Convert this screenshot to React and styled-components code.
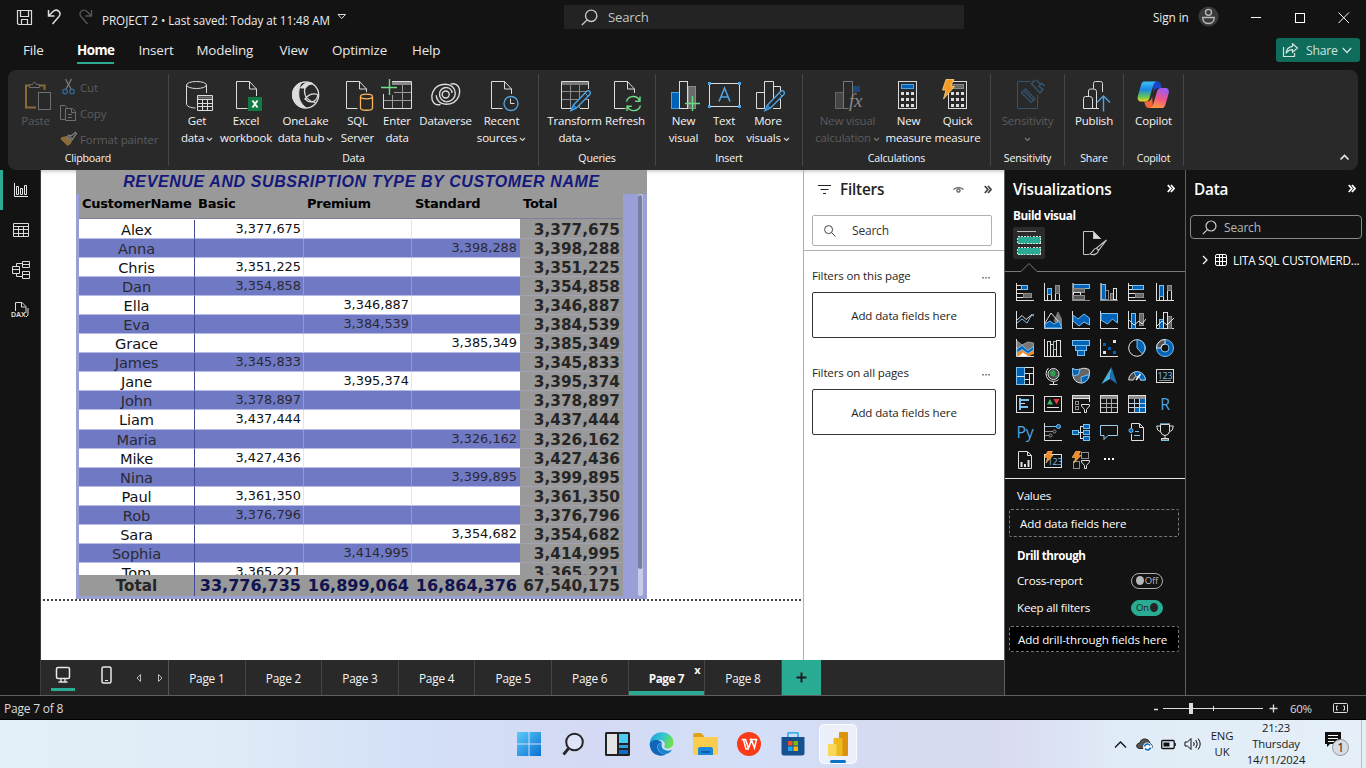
import React from "react";
import styled, { createGlobalStyle, css } from "styled-components";

const ui = `"Open Sans", "Noto Sans", sans-serif`;
const C = { teal: "#2aac94", blue: "#0063b8", sky: "#4fa3e0", ink: "#dcdcdc", ribbon: "#292929", dark: "#131313", grey: "#8a8a8a" };

const Global = createGlobalStyle`
  * { box-sizing: border-box; }
  html, body { margin: 0; padding: 0; overflow: hidden; }
  body { font-family: ${ui}; font-size: 11.5px; letter-spacing: -0.2px; background: ${C.dark}; color: #fff; }
  svg { display: block; flex: none; }
`;

const Window = styled.div`
  width: 1366px; height: 768px; display: flex; flex-direction: column; background: ${C.dark}; white-space: nowrap; overflow: hidden;
`;

/* ---------- Title bar ---------- */
const TitleBar = styled.header`height: 34px; display: flex; align-items: flex-start; flex: none; padding-left: 16px;`;
const QuickAccess = styled.div`display: flex; width: 86px; padding-top: 8px; gap: 13px;`;
const DocName = styled.div`
  width: 462px; display: flex; gap: 7px; padding-top: 12px; line-height: 17px; color: #ececec; font-size: 11.7px; letter-spacing: -0.06px;
  svg { margin-top: 1px; }
`;
const TopSearch = styled.div`
  width: 400px; height: 24px; margin-top: 5px; background: #232323; display: flex; align-items: center; gap: 10px; padding-left: 17px;
  color: #c4c4c4; font-size: 13.2px;
`;
const Account = styled.div`margin-left: 189px; display: flex; padding-top: 6px; gap: 9px; line-height: 23px; color: #ececec; font-size: 11.8px; letter-spacing: -0.1px;`;
const WinButtons = styled.div`display: flex; gap: 31px; margin-left: 30px; padding-top: 11px;`;

/* ---------- Menu ---------- */
const MenuBar = styled.nav`height: 36px; display: flex; flex: none; padding-left: 23px;`;
const MenuItem = styled.div`
  width: ${p => p.$w}px; font-size: 13.4px; line-height: 32px; color: #e8e8e8; letter-spacing: -0.17px;
  span { display: inline-block; height: 30px; ${p => p.$on && css`font-weight: 700; color: #fff; letter-spacing: -0.55px; border-bottom: 2px solid ${C.teal};`} }
`;
const ShareButton = styled.button`
  margin: 4px 6px 0 auto; width: 84px; height: 24px; border: 0; border-radius: 3px; background: #0f6b5a; color: #cfe4de;
  font: 12.2px ${ui}; letter-spacing: -0.2px; display: flex; align-items: center; padding: 0 8px 0 6px; gap: 7px;
  svg:last-child { margin-left: -3px; }
`;

/* ---------- Ribbon ---------- */
const Ribbon = styled.section`
  height: 100px; margin: 0 8px; background: ${C.ribbon}; border-radius: 8px; display: flex; flex: none; padding: 4px 0;
`;
const Group = styled.div`
  width: ${p => p.$w}px; border-right: 1px solid #454545; display: flex; flex-direction: column; height: 92px;
`;
const Items = styled.div`height: 75px; display: flex; padding-left: ${p => p.$pl || 0}px;`;
const GroupName = styled.div`
  height: 17px; line-height: 18px; text-align: center; font-size: 10.6px; font-weight: 500; color: #f6f6f6; letter-spacing: -0.2px;
`;
const RibbonItem = styled.div`
  width: ${p => p.$w}px; display: flex; flex-direction: column; align-items: center; padding-top: 5px;
  color: ${p => (p.$dim ? "#5c5c5c" : "#f4f4f4")}; letter-spacing: -0.18px;
`;
const Label = styled.div`
  height: 16.5px; line-height: 16px; display: flex; align-items: center; gap: 2px; justify-content: center;
  svg { margin-top: 4px; }
`;
const ClipList = styled.div`display: flex; flex-direction: column; margin-left: 8px; `;
const ClipRow = styled.div`height: 26px; flex: none; display: flex; align-items: center; color: #5c5c5c; letter-spacing: -0.15px;`;
const Collapse = styled.div`margin-left: auto; align-self: flex-end; padding: 0 8px 5px 0;`;

/* ---------- Body ---------- */
const Body = styled.main`height: 525px; display: flex; flex: none;`;
const Rail = styled.aside`width: 41px; display: flex; flex-direction: column; border-right: 1px solid #3c3c3c;`;
const RailItem = styled.div`
  height: 40px; display: flex; align-items: center; justify-content: center; border-left: 3px solid ${p => (p.$on ? C.teal : "transparent")}; padding-right: 2px;
`;
const Work = styled.div`width: 963px; display: flex; flex-direction: column;`;
const WorkTop = styled.div`height: 490px; display: flex;`;
const Canvas = styled.div`
  width: 762px; background: #fff; padding-left: 35px; overflow: hidden; box-shadow: inset 0 5px 4px -4px #bbb;
`;
const PageEdge = styled.div`
  height: 2px; margin-left: -35px; width: 761px; background: repeating-linear-gradient(90deg, #fff 0 2px, #444 2px 4px);
`;

/* ---------- Matrix visual ---------- */
const Matrix = styled.div`width: 571px; height: 429px; background: #9a9fd8; color: #111; font-family: "DejaVu Sans", sans-serif; letter-spacing: 0;`;
const MatrixTitle = styled.h1`
  margin: 0; height: 24px; background: #999; text-align: center; font: italic 700 16px/23px "Liberation Sans", sans-serif; color: #14187c; letter-spacing: 0.6px;
`;
const MatrixBody = styled.div`display: flex; padding-left: 3px; height: 405px;`;
const Grid = styled.div`width: 544px; display: flex; flex-direction: column;`;
const HeadRow = styled.div`
  height: 25px; background: #999; border-bottom: 1px solid #7c809c; display: flex; font-weight: 700; font-size: 13px; line-height: 19px; letter-spacing: -0.25px; color: #000; flex: none;
`;
const HeadCell = styled.div`width: ${p => p.$w}px; padding-left: 3px;`;
const Rows = styled.div`height: 356px; overflow: hidden; background: #fff;`;
const RowsInner = styled.div`padding-top: 1px; background: linear-gradient(90deg, transparent 441px, #999 441px);`;
const Row = styled.div`
  height: 19.06px; display: flex; background: ${p => (p.$alt ? "#7079c4" : "#fff")}; color: ${p => (p.$alt ? "#2a2a33" : "#111")};
`;
const NameCell = styled.div`
  width: 116px; border-right: 1px solid #454a94; border-bottom: 1px solid #b9bde6; text-align: center; font-size: 14.6px; line-height: 19.5px; letter-spacing: -0.1px;
`;
const ValueCell = styled.div`
  width: ${p => p.$w}px; border-right: ${p => (p.$last ? "0" : "1px solid rgba(190,194,230,.45)")}; border-bottom: 1px solid #b9bde6;
  padding-right: ${p => (p.$last ? 3 : 2)}px; text-align: right; font-size: 12.9px; line-height: 17.5px;
`;
const TotalCell = styled.div`
  width: 103px; background: #999; border-bottom: 1px solid #a2a2b2; color: #262626; font-weight: 700; font-size: 15.3px; line-height: 20px; text-align: right; padding-right: 3px;
`;
const TotalRow = styled.div`height: 21px; background: #999; display: flex; font-weight: 700; font-size: 16px; line-height: 22px; color: #10134f; flex: none;`;
const TotalName = styled.div`width: 116px; border-right: 1px solid #454a94; text-align: center; font-size: 15.2px; color: #262626;`;
const TotalValue = styled.div`width: ${p => p.$w}px; text-align: right; padding-right: 3px; ${p => p.$grand && css`font-size: 15.3px; color: #262626;`}`;
const Scroll = styled.div`width: 5px; height: 402px; margin-left: 15px; background: #c9cbea; border-radius: 3px;`;
const Thumb = styled.div`height: 374px; background: #7b7f9f; border-radius: 3px; margin-top: 1px; border-right: 1px solid #b9bbd6;`;

/* ---------- Filters ---------- */
const Filters = styled.aside`width: 201px; background: #fff; border-left: 1px solid #b3b0ad; color: #252423; box-shadow: inset 0 5px 4px -4px #bbb;`;
const PaneHead = styled.div`height: 38px; display: flex; align-items: center; padding: 0 12px 0 14px; gap: 9px;`;
const PaneTitle = styled.h2`margin: 0; font-size: 15.3px; font-weight: 600; letter-spacing: -0.2px; line-height: 20px; flex: 1;`;
const PaneTools = styled.div`display: flex; align-items: center; gap: 20px; margin-top: 1px;`;
const SearchBox = styled.div`
  height: ${p => p.$h}px; border: 1px solid ${p => p.$b}; border-radius: 2px; display: flex; align-items: center; gap: ${p => p.$gap}px; padding-left: 11px; font-size: 12px;
  color: ${p => p.$c};
`;
const FilterTop = styled.div`height: 81px; border-bottom: 1px solid #b3b0ad; ${SearchBox} { margin: 7px 12px 0 8px; }`;
const FilterBlock = styled.div`height: 97px; padding: 16px 8px 0;`;
const FilterLabel = styled.div`height: 25px; line-height: 18px; display: flex; justify-content: space-between; padding-right: 5px; letter-spacing: -0.12px;`;
const DropBox = styled.div`
  height: 46px; border: 1px solid #333; border-radius: 2px; display: flex; align-items: center; justify-content: center; font-size: 11.5px; letter-spacing: -0.1px;
`;

/* ---------- Page tabs ---------- */
const TabBar = styled.div`height: 35px; background: ${C.ribbon}; display: flex; `;
const ViewSwitch = styled.div`width: 128px; border-right: 1px solid #555; display: flex; padding: 6px 3px 0 10px;`;
const DeviceButton = styled.div`
  width: 24px; height: 25px; display: flex; justify-content: center; border-bottom: 3px solid ${p => (p.$on ? C.teal : "transparent")}; margin-right: ${p => p.$mr}px;
`;
const Tab = styled.div`
  width: 76.6px; position: relative; text-align: center; line-height: 37px; font-size: 11.8px; letter-spacing: -0.2px; color: #f6f6f6; border-right: 1px solid #454545;
  ${p => p.$on && css`font-weight: 700; letter-spacing: -0.45px; box-shadow: inset 0 -4px 0 ${C.teal};`}
`;
const TabClose = styled.span`position: absolute; right: 4px; top: 1px; font-size: 11px; line-height: 18px; font-weight: 700;`;
const AddTab = styled.div`width: 39px; background: ${C.teal}; display: flex; align-items: center; justify-content: center; padding-bottom: 1px;`;

/* ---------- Visualizations ---------- */
const Viz = styled.aside`width: 182px; border: 0 solid #5f5f5f; border-left-width: 1px; border-right-width: 1px;`;
const VizHead = styled.div`height: 38px; display: flex; align-items: center; padding: 0 10px 0 8px; svg { margin-top: -1px; }`;
const VizSub = styled.div`height: 19px; line-height: 15px; padding-left: 8px; font-weight: 700; letter-spacing: -0.45px; font-size: 11.8px;`;
const VizModes = styled.div`display: flex; height: 32px; padding-left: 8px; gap: 34px;`;
const Mode = styled.div`width: 32px; height: 32px; border-radius: 2px; background: ${p => (p.$on ? "#2b2b2b" : "none")}; display: flex; align-items: center; justify-content: center;`;
const VizGrid = styled.div`display: grid; grid-template-columns: repeat(6, 18px); grid-auto-rows: 18px; gap: 10px; padding: 11px 0 0 11px; height: 207px; border-bottom: 1px solid #e8e8e8;`;
const GlyphCell = styled.div`
  font-size: 16px; line-height: 18px; color: ${C.sky}; display: flex; align-items: center; justify-content: center; letter-spacing: -0.2px;
`;
const Wells = styled.div`padding: 7px 6px 0 4px; font-size: 11.6px;`;
const WellLabel = styled.div`height: ${p => (p.$b ? 21 : 23)}px; line-height: 20px; padding-left: 8px; font-weight: ${p => (p.$b ? 700 : 500)}; letter-spacing: ${p => (p.$b ? -0.45 : -0.25)}px;`;
const Well = styled.div`
  height: ${p => p.$h}px; border: 1px dashed #777; border-radius: 2px; background: ${p => (p.$black ? "#000" : "none")}; padding-left: ${p => (p.$black ? 8 : 10)}px;
  display: flex; align-items: center; margin: ${p => (p.$black ? 5 : 0)}px 0 9px; font-weight: 500; letter-spacing: -0.1px;
`;
const ToggleRow = styled.div`height: 27px; display: flex; align-items: center; justify-content: space-between; padding: 0 16px 0 8px; font-weight: 500;`;
const Toggle = styled.div`
  width: 32px; height: 16px; border-radius: 8px; border: 1px solid ${p => (p.$on ? C.teal : "#b0b0b0")}; background: ${p => (p.$on ? C.teal : "none")};
  display: flex; flex-direction: ${p => (p.$on ? "row-reverse" : "row")}; align-items: center; gap: 1px; padding: 0 4px; font-size: 9.5px; font-weight: 400; color: ${p => (p.$on ? "#222" : "#b8b8b8")};
  i { width: 9px; height: 9px; border-radius: 50%; background: ${p => (p.$on ? "#252525" : "#b8b8b8")}; }
`;

/* ---------- Data ---------- */
const DataPane = styled.aside`flex: 1;`;
const DataSearch = styled.div`padding: 7px 4px 0 4px; ${SearchBox} { border-radius: 4px; }`;
const TableNode = styled.div`height: 24px; margin-top: 9px; padding-left: 15px; display: flex; align-items: center; gap: 5px; font-size: 11.7px; font-weight: 500; letter-spacing: -0.2px;`;

/* ---------- Status + taskbar ---------- */
const StatusBar = styled.footer`height: 25px; flex: none; border-top: 1px solid #5f5f5f; border-bottom: 1px solid #000; display: flex; align-items: center; padding: 2px 18px 0 4px; color: #dcdcdc; font-size: 12px;`;
const Zoom = styled.div`margin-left: auto; display: flex; align-items: center;`;
const Percent = styled.span`margin: 0 19px 0 12px; width: 24px; font-size: 11.5px; letter-spacing: -0.35px;`;
const Taskbar = styled.div`
  height: 48px; flex: none; display: flex; align-items: center; color: #1a1a1a;
  background: linear-gradient(90deg, #e3f0f8 0, #dfebf7 17%, #d3e0f7 30%, #d4daf4 43%, #d3dff8 55%, #d6dbf0 66%, #d9dcf1 74%, #e0ecf7 82%, #e4eff8 100%);
`;
const Apps = styled.div`margin-left: 507px; display: flex;`;
const AppSlot = styled.div`
  width: 44px; height: 40px; display: flex; align-items: center; justify-content: center; position: relative;
  ${p => p.$on && css`width: 38px; margin-left: 4px; background: rgba(255,255,255,.55); border-radius: 5px; border: 1px solid rgba(255,255,255,.7); &::after { content: ""; position: absolute; bottom: 0; width: 16px; height: 3px; border-radius: 2px; background: #0a73c8; }`}
`;
const Tray = styled.div`margin-left: auto; display: flex; align-items: center; gap: 8px;`;
const TrayText = styled.div`width: ${p => p.$w}px; text-align: center; font-size: 11.3px; line-height: ${p => p.$lh}px; letter-spacing: ${p => p.$ls}px;`;
const Edge = styled.div`width: 5px; height: 48px; border-left: 1px solid #b9c0cc; margin-left: 3px;`;

/* ---------- Icons ---------- */
const Svg = ({ w = 18, h = 18, s = C.ink, children, crisp }) => (
  <svg width={w} height={h} viewBox={`0 0 ${w} ${h}`} fill="none" stroke={s} strokeWidth="1" shapeRendering={crisp ? "crispEdges" : undefined}>{children}</svg>
);
const Chev = ({ c = "#d0d0d0" }) => <Svg w={7} h={5} s={c}><path d="M1 1l2.5 2.5L6 1" strokeWidth="1.2" /></Svg>;
const Lens = ({ c, n = 15, w = 1.2 }) => (
  <svg width={n} height={n} viewBox="0 0 15 15" fill="none" stroke={c} strokeWidth={w}><circle cx="9" cy="6" r="5" /><path d="M5.4 9.6L.8 14.2" /></svg>
);
const LensR = ({ c }) => (
  <svg width="12" height="12" viewBox="0 0 12 12" fill="none" stroke={c}><circle cx="4.6" cy="4.6" r="4" /><path d="M7.5 7.5l4 4" /></svg>
);
const Doc = ({ x, cut }) => (
  <path d={`M${x + 20.5} ${cut || 18}V10l-7-7.5H${x + .5}v27h${cut ? 11 : 11.5}M${x + 13.5} 2.5V10h7`} />
);
const Pencil = () => (
  <g stroke={C.sky}><path d="M19.5 26L32.5 12.5a2.2 2.2 0 013.3 3L22.5 29l-5.5 2.5z" fill="#292929" strokeWidth="1.4" /><path d="M19.5 26l3 3-5.5 2.5z" fill="#0a78d4" /><path d="M31 14l3 3" /></g>
);
const Calc = ({ x, d }) => (
  <g><rect x={x + .5} y="2.5" width="18" height="27" fill="#292929" /><rect x={x + 3.5} y="5.5" width="12" height="4" fill={d} stroke={d === C.blue ? C.sky : C.grey} />
    {[13, 19, 25].map(y => [3, 8, 13].map(k => <rect key={y + "-" + k} x={x + k} y={y} width="3" height="3" fill={C.ink} stroke="none" />))}</g>
);

const icons = {
  get: <><path d="M9.5 6v19c0 2 4 4 9 4M29.5 6v8" /><ellipse cx="19.5" cy="6" rx="10" ry="3.5" /><path d="M20.5 16.500h15v15h-15zM20.500 20.500h15M20.500 24.500h15M20.500 27.500h15M25.500 20v11M30.500 20v11" /><path d="M21 18.500h14" stroke="#777" strokeWidth="2" /></>,
  excel: <><Doc x={10} cut={17} /><rect x="22" y="18" width="14" height="14" fill="#107c41" stroke="none" /><path d="M26.500 21.500l5 7M31.500 21.500l-5 7" stroke="#fff" strokeWidth="1.8" /></>,
  lake: <><circle cx="20.7" cy="16" r="13" strokeWidth="1.3" /><path d="M16.500 3.500C11 5 7 10 7.500 17c.6 6 6 11.500 13.500 11.700-5-4-7-8-7.200-12.700C13.600 11 14.500 7 16.500 3.500z" fill={C.ink} /><path d="M17 8c4-4 8-4.500 10.500-3.300C22 5 19.500 8 19.500 12c0 6 4 10.500 11 11.500M33 15.500c-5-1.500-10 .5-13 4.500 5 5 11.500 3.500 13-4.500z" strokeWidth="1.3" /><path d="M15.500 9c3-5 8-6.500 12.500-4.300-3.500.3-5.500 1.500-7.500 4.300z" fill={C.ink} /></>,
  sql: <><Doc x={9} cut={13} /><path d="M23.500 18v11c0 3 12 3 12 0V18" stroke="#f7b45a" fill="#292929" strokeWidth="1.3" /><ellipse cx="29.500" cy="17.500" rx="6" ry="2.300" stroke="#f7b45a" strokeWidth="1.300" /></>,
  enter: <><path d="M15 4.500h19" stroke="#8a8a8a" strokeWidth="3" /><path d="M7 21.500h27M17 13.500h17M15.500 16v13M25.500 6v23" stroke="#9a9a9a" /><path d="M15 2.500h19.500v27H6.500V15" /><path d="M4 8.500h16M12.500 0v16" stroke="#6ddc84" strokeWidth="1.400" /></>,
  dataverse: <g strokeWidth="1.400"><path d="M25.500 5.200c4-1.500 7.500.5 8.800 4.300 1.500 5-1 11-5.500 13.800-2.500 1.600-5 2-7.800 2-5.500 0-9.800-4-9.800-9" /><path d="M15.500 25.300c-4 1.500-7-.5-8.300-4.300-1.500-5 1-11 5.500-13.800 2.500-1.600 5-2 7.800-2 5.500 0 9.800 4 9.800 9s-4 8.500-8.800 8.500" /><circle cx="20.700" cy="15.500" r="3.500" /><path d="M27 14c0-3.500-2.800-5.500-6-5.500s-6.500 2.500-6.500 6.500 3 7.700 7 7.700" /></g>,
  recent: <><Doc x={10} cut={15} /><circle cx="30" cy="24.500" r="7" stroke={C.sky} strokeWidth="1.400" fill="#292929" /><path d="M29.500 19.500v5h4" /></>,
  transform: <><path d="M8 4.500h27" stroke="#777" strokeWidth="3" /><path d="M7.500 12.500h27M7.500 20.500h27M16.500 6v23M25.500 6v23" stroke="#8a8a8a" /><path d="M34.500 10V2.500h-27v27H18M34.500 20v9.500H26" /><Pencil /></>,
  refresh: <><Doc x={9} cut={14} /><g stroke="#6ddc84" strokeWidth="1.400"><path d="M21.500 22.500a7 7 0 0113.200-.5M35 17.500V22.300h-4.800M35.500 26.500a7 7 0 01-13.200.8M22 32v-4.800h4.800" /></g></>,
  newVisual: <><rect x="8.500" y="13.500" width="8" height="16" fill={C.blue} stroke={C.sky} /><rect x="25.500" y="7.500" width="7" height="22" fill="#6a6a6a" stroke="#8a8a8a" /><rect x="16.500" y="2.500" width="8" height="27" fill="#292929" /><path d="M29.500 17v15M22 24.500h15" stroke="#6ddc84" strokeWidth="1.400" /></>,
  textBox: <><rect x="5.500" y="4.500" width="30" height="23" /><g fill={C.sky} stroke="none"><rect x="4" y="3" width="3" height="3" /><rect x="34" y="3" width="3" height="3" /><rect x="4" y="26" width="3" height="3" /><rect x="34" y="26" width="3" height="3" /></g><path d="M15 22.500L20.500 9 26 22.500M17 18h7" stroke={C.sky} strokeWidth="1.600" /></>,
  moreVisuals: <><path d="M16.500 13.500h-8v16h8M25.500 7.500h7V12M16.500 29.500v-27h9v18M32.500 20v9.500H25" /><Pencil /></>,
  visualCalc: <><rect x="8.500" y="13.500" width="8" height="16" fill="#444" stroke="#666" /><rect x="25" y="7" width="8" height="6" fill="#1d4a75" stroke="none" /><path d="M25.500 18V2.500h-9v27h5" stroke="#777" /><text x="22" y="28" fontFamily="Liberation Serif, serif" fontStyle="italic" fontSize="19" fill="#8a8a8a" stroke="none">fx</text></>,
  newMeasure: <Calc x={10} d={C.blue} />,
  quick: <><Calc x={11} d="#666" /><path d="M9 .5h8l-3.500 7h4L6.500 20l2.500-9H5.500z" fill="#f59a23" stroke="#fbd38a" strokeWidth=".8" /></>,
  sensitivity: <g stroke="#34526a"><path d="M24 2.500H10.500v27h20V16" /><path d="M14.500 13.500l4-3.500 9.500 10-4 3.500zM17 12l9 9M19 10.500l8.500 9" strokeWidth="1.300" /><path d="M28 .8l-3.500 4 8.500 9 3-3.500-4-3 2.500-3 3 2.500M29.500 1l3.500 4" strokeWidth="1.600" /></g>,
  publish: <><path d="M19.500 9.500V4.500q0-2 2-2h5q2 0 2 2V13M14.500 17v-5q0-2 2-2h3.500q2.500 0 2.500 2.500v17M9.500 29.500V19.500q0-2 2-2h4q3 0 3 2.500v9.500zM18.500 29.500H25" /><path d="M29.500 32.500V17M23 23.500l6.500-6.500 6.500 6.500" stroke={C.sky} strokeWidth="1.400" /></>,
  copilot: <><defs>
    <linearGradient id="cA" x1="0" y1="0" x2="0" y2="1"><stop offset="0" stopColor="#3bc3f3" /><stop offset=".4" stopColor="#1c86e8" /><stop offset=".75" stopColor="#5fc45a" /><stop offset="1" stopColor="#f6cf1f" /></linearGradient>
    <linearGradient id="cB" x1=".6" y1="0" x2=".3" y2="1"><stop offset="0" stopColor="#9a5cf5" /><stop offset=".5" stopColor="#f0558a" /><stop offset="1" stopColor="#ff9d3c" /></linearGradient></defs>
    <g stroke="none"><path d="M20 2.500h4.500c2 0 2.800 1.500 3.300 3l1 3.500h-3c-3 0-4.500 1.500-5.500 5z" fill="#1c46c8" /><path d="M20 29h-4.500c-2 0-2.800-1.500-3.300-3l-1-3.500h2.500c3 0 4.500-1.500 5.500-5z" fill="#f2663c" /><path d="M11 2.500h13c-2 0-3 1.500-3.800 4L16.500 19c-1 2.700-2 3.500-4 3.500H8c-3 0-4-2.500-3-6L8 6c.8-2.300 1.500-3.500 3-3.500z" fill="url(#cA)" /><path d="M29.500 29H16.500c2 0 3-1.500 3.800-4L24 12.500c1-2.700 2-3.500 4-3.500h4.500c3 0 4 2.500 3 6L32.500 25.500c-.8 2.300-1.500 3.500-3 3.500z" fill="url(#cB)" /></g></>,
};

const ribbonGroups = [
  { name: "Data", w: 370, pl: 7, items: [["get", 42, "Get", "data", 1], ["excel", 56, "Excel", "workbook"], ["lake", 63, "OneLake", "data hub", 1], ["sql", 41, "SQL", "Server"], ["enter", 38, "Enter", "data"], ["dataverse", 59, "Dataverse"], ["recent", 53, "Recent", "sources", 1]] },
  { name: "Queries", w: 117, pl: 6, items: [["transform", 59, "Transform", "data", 1], ["refresh", 42, "Refresh"]] },
  { name: "Insert", w: 147, pl: 8, items: [["newVisual", 39, "New", "visual"], ["textBox", 42, "Text", "box"], ["moreVisuals", 46, "More", "visuals", 1]] },
  { name: "Calculations", w: 188, pl: 8, items: [["visualCalc", 73, "New visual", "calculation", 1, 1], ["newMeasure", 49, "New", "measure"], ["quick", 49, "Quick", "measure"]] },
  { name: "Sensitivity", w: 74, pl: 0, items: [["sensitivity", 73, "Sensitivity", "", 1, 1]] },
  { name: "Share", w: 59, pl: 0, items: [["publish", 58, "Publish"]] },
  { name: "Copilot", w: 60, pl: 0, items: [["copilot", 59, "Copilot"]] },
];

const B = C.blue, S = "#7cc0ee", G = "#8f8f8f", W = "#e0e0e0";
const axis = <path d="M.5 0v17.500H18" />;
const Funnel = () => <path d="M9.500 9.500h8v1.500l-3 3.500v3h-2v-3l-3-3.500z" fill="#131313" />;
const SmallBolt = () => <path d="M4 0h4.500L6.500 4.500H9L2 12l1.500-5.500H0z" fill="#f58a23" stroke="#fbd38a" strokeWidth=".5" />;
const Crisp = ({ children }) => <g shapeRendering="crispEdges">{children}</g>;
const vizIcons = [
  <Crisp>{axis}<rect x=".5" y="2.500" width="5" height="4" /><rect x="5.500" y="2.500" width="6" height="4" fill={B} stroke={S} /><rect x=".5" y="10.500" width="7" height="4" /><rect x="7.500" y="10.500" width="8" height="4" fill="#666" stroke={G} /></Crisp>,
  <Crisp>{axis}<rect x="3.500" y="11.500" width="4" height="6" /><rect x="3.500" y="5.500" width="4" height="6" fill={B} stroke={S} /><rect x="11.500" y="10.500" width="4" height="7" /><rect x="11.500" y="2.500" width="4" height="8" fill="#666" stroke={G} /></Crisp>,
  <Crisp><path d="M.5 0v17.500H18" stroke={G} strokeWidth="2" /><rect x="1.500" y="1.500" width="16" height="4" fill={B} stroke={S} /><rect x="1.500" y="5.500" width="11" height="4" fill="#666" stroke={G} /><rect x="1.500" y="9.500" width="7" height="3" /><rect x="1.500" y="12.500" width="11" height="4" fill="#555" stroke={G} /></Crisp>,
  <Crisp><path d="M.5 0v17.500H18" stroke={G} strokeWidth="2" /><rect x="1.500" y="1.500" width="4" height="15" fill={B} stroke={S} /><rect x="5.500" y="7.500" width="3" height="9" stroke={G} /><rect x="10.500" y="10.500" width="3" height="6" fill="#555" stroke={G} /><rect x="13.500" y="5.500" width="3" height="11" /></Crisp>,
  <Crisp>{axis}<rect x=".5" y="2.500" width="4" height="4" /><rect x="4.500" y="2.500" width="11" height="4" fill={B} stroke={S} /><rect x=".5" y="10.500" width="7" height="4" /><rect x="7.500" y="10.500" width="8" height="4" fill="#666" stroke={G} /></Crisp>,
  <Crisp>{axis}<rect x="3.500" y="13.500" width="4" height="4" /><rect x="3.500" y="2.500" width="4" height="11" fill={B} stroke={S} /><rect x="11.500" y="7.500" width="4" height="10" /><rect x="11.500" y="2.500" width="4" height="5" fill="#666" stroke={G} /></Crisp>,
  <>{axis}<path d="M1 9l5-4.500 4 4 6-5 2 2" /><path d="M1 12l5-4 5 4 4-7 3-2" stroke={S} /></>,
  <>{axis}<path d="M10 10l4-9 4 8v8z" fill="#777" stroke="#777" /><path d="M1 12l6-10 7 8" /><path d="M1 17v-4l5-3 4 3 5-3 3 7z" fill={B} stroke={S} /></>,
  <>{axis}<path d="M1 4l5 4 6-5 5.500 4v7l-5.500-3-5 4-6-5z" fill={B} stroke={S} /></>,
  <>{axis}<path d="M1 2.500h16.500V12l-5-4-5 5-6.500-4z" fill={B} stroke={S} /></>,
  <>{axis}<rect x="3.500" y="2.500" width="4" height="15" fill={B} stroke={S} /><rect x="11.500" y="2.500" width="4" height="12" fill="#666" stroke={G} /><path d="M1 9l5 5 5-4 3 3 4-5" /></>,
  <>{axis}<rect x="3.500" y="8.500" width="4" height="9" fill={B} stroke={S} /><rect x="11.500" y="5.500" width="4" height="12" fill="#666" stroke={G} /><rect x="7.500" y="1.500" width="4" height="16" /><path d="M1 15l5-5 5 4 7-7" /></>,
  <>{axis}<path d="M1 2l5 4 6-3 5.500 1v7l-4.500 2-6-2-6-3z" fill="#777" stroke="#999" /><path d="M1 14l5-5 6 6 6-6v6l-5 2H1z" fill="#f08a23" stroke="none" /><path d="M1 10l5-3.500 6 5 5.500-4v3.500l-5.500 3.500-6-4-5 3.500z" fill={B} stroke={S} /><path d="M3 17l4-3.500 5 3.500z" fill="#fff" stroke="none" /></>,
  <Crisp>{axis}<rect x="3.500" y="2.500" width="3" height="15" /><rect x="6.500" y="5.500" width="3" height="12" /><rect x="9.500" y="2.500" width="3" height="8" stroke={S} /><rect x="12.500" y="1.500" width="4" height="16" /></Crisp>,
  <Crisp><g fill={B} stroke={S}><rect x=".5" y="1.500" width="17" height="5" /><rect x="3.500" y="6.500" width="11" height="5" /><rect x="5.500" y="11.500" width="7" height="5" /></g></Crisp>,
  <Crisp>{axis}<g stroke="none"><rect x="3" y="4" width="3" height="3" fill={B} /><rect x="13" y="1" width="3" height="3" fill={W} /><rect x="8" y="8" width="3" height="3" fill={B} /><rect x="3" y="12" width="3" height="3" fill={W} /><rect x="13" y="12" width="3" height="3" fill={B} /></g></Crisp>,
  <><circle cx="9" cy="9" r="8.300" /><path d="M9 .8v8.200l5.500 6A8.300 8.300 0 009 .8z" fill={B} stroke={S} /></>,
  <><circle cx="9" cy="9" r="6.300" strokeWidth="4.500" stroke={B} /><circle cx="9" cy="9" r="8.500" stroke={S} /><circle cx="9" cy="9" r="4" stroke={S} /><path d="M.5 9A8.500 8.500 0 019 .5v4.500a4 4 0 00-4 4z" fill="#555" stroke={W} /></>,
  <Crisp><rect x=".5" y=".500" width="17" height="17" /><rect x=".5" y=".500" width="8" height="17" fill={B} stroke={S} /><path d="M9 6.500h8M13.500 6.500v11M9 12.500h4.500M.5 9.500H9" /></Crisp>,
  <><circle cx="9.500" cy="7" r="5.500" fill="#444" /><path d="M6 5l3.500-2.500L12 6l-2 4-3.500-1.500zM11 9l3-1-2 3z" fill="#2f9f50" stroke="none" /><path d="M4.500 1a8 8 0 00-.5 11c3 3 8 3 10.500.5M9.500 14.500v2.500M5.500 17.500h8" /></>,
  <><path d="M.5 1.500c2.500 1.500 5 1.500 8 .5 3-1.500 6-.5 8.500.5 1 3 .5 7-1 9.500-2 3-4.500 4-7 4s-5.500-1.500-7-4C.5 9 .3 5 .5 1.500z" fill="#666" /><path d="M.5 1.500c2.500 1.500 5 1.500 7.500.5L6.500 7.500 1.500 9C.5 6.500.3 4 .5 1.500zM9 10l8-2.500c-.3 2-.7 3.500-1.500 5-1.500 2-3.500 3-6 3.500z" fill={B} stroke={S} /></>,
  <><path d="M11.500 0L1.500 17l8.500-5z" fill="#4bb0dd" stroke="none" /><path d="M11.500 0L10 12l7 5z" fill="#1c6fa8" stroke="none" /></>,
  <><path d="M.7 13A8.300 8.300 0 0117.300 13H12.500a3.500 3.500 0 00-7 0z" fill="#444" /><path d="M6 5.300A8.300 8.300 0 0117.300 13H12.500a3.500 3.500 0 00-4.500-3.300z" fill={B} stroke={S} /><path d="M8 13l4.500-6" stroke="#fff" strokeWidth="1.500" /></>,
  <><Crisp><rect x=".5" y="2.500" width="17" height="13" /><path d="M3 13.500h12" stroke={G} /></Crisp><text x="9" y="11.500" fontSize="9" textAnchor="middle" fontFamily="Open Sans" fill={S} stroke="none" letterSpacing="-.2">123</text></>,
  <Crisp><rect x=".5" y=".500" width="17" height="17" /><path d="M3.500 3v12M5 5h8M5 12h7" stroke={S} strokeWidth="2" /><path d="M5 8.500h4" /></Crisp>,
  <><Crisp><rect x=".5" y="1.500" width="17" height="15" /><path d="M3 12.500h12" /></Crisp><path d="M3 9.500l3-5.500 3 5.500z" fill="#38b565" stroke="none" /><path d="M9.500 4h6l-3 5.500z" fill="#ec3a40" stroke="none" /></>,
  <><Crisp><path d="M17.500 7V.5H.5v17H9M1 3.500h16" /><path d="M1 2h16" stroke={G} strokeWidth="2" /><path d="M3.500 6.500h3v3h-3zM3.500 11.500h3v3h-3z" stroke={G} /></Crisp><Funnel /></>,
  <Crisp><path d="M1 2.500h16" stroke={G} strokeWidth="3" /><path d="M1 8.500h16M1 12.500h16M6.500 4v13M11.500 4v13" stroke="#aaa" /><rect x=".5" y=".500" width="17" height="17" /></Crisp>,
  <Crisp><rect x="12" y="4" width="6" height="14" fill={B} stroke="none" /><rect x="6" y="13" width="12" height="5" fill={B} stroke="none" /><path d="M1 2.500h16" stroke={G} strokeWidth="3" /><path d="M1 8.500h16M1 12.500h16M6.500 4v13M11.500 4v13" stroke="#bcd" /><rect x=".5" y=".500" width="17" height="17" /></Crisp>,
  "R", "Py",
  <>{axis}<path d="M1 3.500h12" stroke={S} /><circle cx="14.500" cy="3.500" r="2" fill={B} stroke={S} /><path d="M1 8.500h8M1 12.500h4" stroke={G} /><circle cx="10.500" cy="8.500" r="1.500" stroke={G} /><circle cx="6.500" cy="12.500" r="1.500" stroke={G} /></>,
  <Crisp><path d="M6.500 9.500H11M11 3.500H8.500v12H11" /><g fill={B} stroke={S}><rect x=".5" y="7.500" width="6" height="4" /><rect x="11.500" y="1.500" width="6" height="4" /><rect x="11.500" y="7.500" width="6" height="4" /><rect x="11.500" y="13.500" width="6" height="4" /></g></Crisp>,
  <path d="M.5 2.500h17v10H8l-4 4v-4H.5z" stroke="#9ccdf0" />,
  <><path d="M3.500 5V.5h8l4 4v13h-12V11M11.500 1v3.500h4" /><circle cx="3" cy="7.500" r="2" fill={B} stroke={S} /><path d="M7 8.500h4M6 12.500h6" stroke={S} /></>,
  <><path d="M4.500 1.500h9v7q-1 4-4.500 4t-4.500-4zM4.500 3H.7q0 5 4 6M13.500 3h3.800q0 5-4 6M9 12.500v3M5.500 17v-1.500h7V17z" /><path d="M4 .8h10M5 17.500h8" stroke={S} /></>,
  <><path d="M2.500 .5h9l4 4v13h-13zM11.500 1v3.500h4" /><path d="M5.500 16v-5M9 16v-3M12.500 16V9" strokeWidth="2" /></>,
  <><Crisp><rect x=".5" y="3.500" width="17" height="13" /></Crisp><text x="11" y="13.500" fontSize="9" textAnchor="middle" fontFamily="Open Sans" fill={S} stroke="none" letterSpacing="-.2">123</text><SmallBolt /></>,
  <><Crisp><path d="M9.500 1.500h7v6h-7zM1.500 10.500h6v7h-6z" stroke={G} /></Crisp><SmallBolt /><Funnel /></>,
  <g fill="#fff" stroke="none"><rect x="4" y="7" width="2" height="2" /><rect x="8" y="7" width="2" height="2" /><rect x="12" y="7" width="2" height="2" /></g>,
];

const people = [
  ["Alex", 0, "3,377,675"], ["Anna", 2, "3,398,288"], ["Chris", 0, "3,351,225"], ["Dan", 0, "3,354,858"], ["Ella", 1, "3,346,887"],
  ["Eva", 1, "3,384,539"], ["Grace", 2, "3,385,349"], ["James", 0, "3,345,833"], ["Jane", 1, "3,395,374"], ["John", 0, "3,378,897"],
  ["Liam", 0, "3,437,444"], ["Maria", 2, "3,326,162"], ["Mike", 0, "3,427,436"], ["Nina", 2, "3,399,895"], ["Paul", 0, "3,361,350"],
  ["Rob", 0, "3,376,796"], ["Sara", 2, "3,354,682"], ["Sophia", 1, "3,414,995"], ["Tom", 0, "3,365,221"],
];
const colW = [109, 108, 108];
const menu = [["File", 54], ["Home", 61.5], ["Insert", 58], ["Modeling", 83], ["View", 52.5], ["Optimize", 80], ["Help", 60]];
const DoubleChev = ({ c }) => <Svg w={8} h={9} s={c}><path d="M.8 1l3 3.500-3 3.500M4 1l3 3.500-3 3.500" strokeWidth="1.800" /></Svg>;
const Dots = () => <Svg w={9} h={18} s="none"><g fill="#888"><rect x="0" y="10" width="2" height="1.500" /><rect x="3" y="10" width="2" height="1.500" /><rect x="6" y="10" width="2" height="1.500" /></g></Svg>;

const FilterSection = ({ label }) => (
  <FilterBlock><FilterLabel>{label}<Dots /></FilterLabel><DropBox>Add data fields here</DropBox></FilterBlock>
);

export default function App() {
  return (
    <Window>
      <Global />
      <TitleBar>
        <QuickAccess>
          <Svg w={18} h={18}><path d="M1.500 2.500h14v14h-13l-1-1zM4.500 2.500v6h8v-6M5.500 16v-4.500h6V16" strokeWidth="1.200" /></Svg>
          <Svg w={17} h={18}><path d="M1.500 2v6h6M2 7.500l4-4c4-3.500 9 1 6 5L5.500 16" strokeWidth="1.500" /></Svg>
          <Svg w={17} h={18} s="#555"><path d="M14.500 2v6h-6M14 7.500l-4-4c-4-3.500-9 1-6 5l6.500 7.500" strokeWidth="1.400" /></Svg>
        </QuickAccess>
        <DocName>PROJECT 2 • Last saved: Today at 11:48 AM<Svg w={10} h={8}><path d="M1 1.500h7.500L4.700 5.500z" /></Svg></DocName>
        <TopSearch><Lens c="#c8c8c8" n={17} />Search</TopSearch>
        <Account>Sign in
          <Svg w={21} h={21} s="#bdbdbd"><circle cx="10.500" cy="10.500" r="10" fill="#3a3a3a" stroke="none" /><circle cx="10.500" cy="6.300" r="3" strokeWidth="1.300" /><path d="M4.700 11.500h11.500c0 4-2.500 6-5.800 6s-5.700-2-5.700-6z" strokeWidth="1.300" /></Svg>
        </Account>
        <WinButtons>
          <Svg w={14} h={14} s="#fff"><path d="M2 6.500h10" /></Svg>
          <Svg w={13} h={14} s="#fff"><rect x="1.500" y="2.500" width="9" height="9" /></Svg>
          <Svg w={14} h={14} s="#fff"><path d="M.5 1.500L11 12M11 1.500L.5 12" /></Svg>
        </WinButtons>
      </TitleBar>
      <MenuBar>
        {menu.map(([t, w]) => <MenuItem key={t} $w={w} $on={t === "Home"}><span>{t}</span></MenuItem>)}
        <ShareButton>
          <Svg w={17} h={15} s="#cfe4de"><path d="M1.500 4v9.500h11V10M10.500.8l5 4.200-5 4.200V6.700C7.500 6.700 5.500 8 4 10.500c.3-4 2.500-6.700 6.500-7.200z" strokeWidth="1.200" /></Svg>
          Share<Svg w={10} h={7} s="#cfe4de"><path d="M.8 1l4.200 4.500L9.200 1" strokeWidth="1.200" /></Svg>
        </ShareButton>
      </MenuBar>
      <Ribbon>
        <Group $w={161}>
          <Items $pl={12}>
            <RibbonItem $w={31} $dim>
              <Svg w={31} h={34} s="#6f6f6f"><path d="M16 28.500H6V6.500H9M20 6.500h4.500V11" stroke="#8a6a35" strokeWidth="2" /><path d="M9.500 8.500v-3h3q2-5 4 0h3v3z" /><rect x="18.500" y="13.500" width="12" height="17" fill="#292929" /></Svg>
              <Label>Paste</Label>
            </RibbonItem>
            <ClipList>
              <ClipRow><Svg w={21} h={18} s="#7a7a7a"><path d="M6.500 1l6 11M12.500 1l-6 11" strokeWidth="1.300" /><circle cx="6" cy="13.500" r="2.200" stroke="#2f6490" strokeWidth="1.400" /><circle cx="13" cy="13.500" r="2.200" stroke="#2f6490" strokeWidth="1.400" /></Svg>Cut</ClipRow>
              <ClipRow><Svg w={21} h={18} s="#6f6f6f"><path d="M6 15.500H1.500v-14H6l2 2M6.500 4.500h7l3 3v9h-10zM12.500 4.500v4h4M9 10.500h4M9 13.500h4" /></Svg>Copy</ClipRow>
              <ClipRow><Svg w={21} h={18} s="#7a7a7a"><path d="M2 9l6.500 6.500 3-2 1-3-4-4-6 1z" fill="#8a6a35" stroke="#8a6a35" /><path d="M7.500 6.500l5 5M9.500 5.500l4 4 1-2 3-4-1-1-4 3z" strokeWidth="1.400" /></Svg>Format painter</ClipRow>
            </ClipList>
          </Items>
          <GroupName>Clipboard</GroupName>
        </Group>
        {ribbonGroups.map(g => (
          <Group key={g.name} $w={g.w}>
            <Items $pl={g.pl}>
              {g.items.map(([ic, w, a, b, chev, dim]) => (
                <RibbonItem key={ic} $w={w} $dim={dim}>
                  <Svg w={w % 2 ? 41 : 40} h={34}>{icons[ic]}</Svg>
                  <Label>{a}</Label>
                  {(b || chev) && <Label>{b}{chev && <Chev c={dim ? "#777" : undefined} />}</Label>}
                </RibbonItem>
              ))}
            </Items>
            <GroupName>{g.name}</GroupName>
          </Group>
        ))}
        <Collapse><Svg w={11} h={7} s="#e8e8e8"><path d="M1.500 5.500l4-4 4 4" strokeWidth="1.700" /></Svg></Collapse>
      </Ribbon>
      <Body>
        <Rail>
          <RailItem $on><Svg w={16} h={16} s="#e8e8e8"><path d="M1.500 1v13.500H15M3.500 4.500h2v8h-2zM7.500 6.500h2v6h-2zM11.500 3.500h2v9h-2z" /></Svg></RailItem>
          <RailItem><Svg w={18} h={16}><path d="M1.500 1.500h15v13h-15zM1.500 4.500h15M1.500 7.500h15M1.500 11.500h15M6.500 4.500v10M11.500 4.500v10" /></Svg></RailItem>
          <RailItem><Svg w={20} h={20}><path d="M1.500 6.500h7v7h-7zM1.500 9.500h7M11.500 1.500h7v6h-7zM11.500 4.500h7M11.500 11.500h7v7h-7zM11.500 14.500h7M5.500 6V3.500h6M5.500 14v2.500h6" /></Svg></RailItem>
          <RailItem><Svg w={20} h={18}><path d="M4.500 10V1.500h6.500l4 4V12M10.500 2v4h4M17 7v7l-2 2" /><text x="0" y="16" fontSize="7" fontWeight="700" fontFamily="Liberation Sans" fill={C.ink} stroke="none" letterSpacing="-.1">DAX</text></Svg></RailItem>
        </Rail>
        <Work>
          <WorkTop>
            <Canvas>
              <Matrix>
                <MatrixTitle>REVENUE AND SUBSRIPTION TYPE BY CUSTOMER NAME</MatrixTitle>
                <MatrixBody>
                  <Grid>
                    <HeadRow>
                      <HeadCell $w={116}>CustomerName</HeadCell><HeadCell $w={109}>Basic</HeadCell><HeadCell $w={108}>Premium</HeadCell>
                      <HeadCell $w={108}>Standard</HeadCell><HeadCell $w={103}>Total</HeadCell>
                    </HeadRow>
                    <Rows>
                      <RowsInner>
                        {people.map(([n, c, v], i) => (
                          <Row key={n} $alt={i % 2}>
                            <NameCell>{n}</NameCell>
                            {colW.map((w, k) => <ValueCell key={k} $w={w} $last={k === 2}>{k === c ? v : ""}</ValueCell>)}
                            <TotalCell>{v}</TotalCell>
                          </Row>
                        ))}
                      </RowsInner>
                    </Rows>
                    <TotalRow>
                      <TotalName>Total</TotalName>
                      <TotalValue $w={109}>33,776,735</TotalValue><TotalValue $w={108}>16,899,064</TotalValue>
                      <TotalValue $w={108}>16,864,376</TotalValue><TotalValue $w={103} $grand>67,540,175</TotalValue>
                    </TotalRow>
                  </Grid>
                  <Scroll><Thumb /></Scroll>
                </MatrixBody>
              </Matrix>
              <PageEdge />
            </Canvas>
            <Filters>
              <FilterTop>
                <PaneHead>
                  <Svg w={13} h={14} s="#252423"><path d="M0 3.500h13M2.500 7.500h8M5 11.500h3" strokeWidth="1.200" /></Svg>
                  <PaneTitle>Filters</PaneTitle>
                  <PaneTools>
                    <Svg w={11} h={10} s="#555"><path d="M.5 4.500Q5.500 .5 10.500 4.500" strokeWidth="1.200" /><circle cx="5.500" cy="5.500" r="1.600" strokeWidth="1.200" /></Svg>
                    <DoubleChev c="#444" />
                  </PaneTools>
                </PaneHead>
                <SearchBox $h={31} $b="#b3b0ad" $gap={16} $c="#333"><LensR c="#444" />Search</SearchBox>
              </FilterTop>
              <FilterSection label="Filters on this page" />
              <FilterSection label="Filters on all pages" />
            </Filters>
          </WorkTop>
          <TabBar>
            <ViewSwitch>
              <DeviceButton $on $mr={19}><Svg w={18} h={18} s="#e8e8e8"><rect x="2.500" y="1.500" width="13" height="11" rx="1.500" strokeWidth="1.500" /><path d="M7 13v2.500M11 13v2.500M4.500 16h9" strokeWidth="1.300" /></Svg></DeviceButton>
              <DeviceButton $mr={18}><Svg w={14} h={19} s="#e8e8e8"><rect x="3" y="1" width="9" height="16" rx="1.500" strokeWidth="1.500" /><path d="M6 14.500h3" /></Svg></DeviceButton>
              <Svg w={29} h={24} s="#bbb"><path d="M4.500 8.500v7L1 12zM22.500 8.500v7L26 12z" /></Svg>
            </ViewSwitch>
            {[1, 2, 3, 4, 5, 6, 7, 8].map(n => <Tab key={n} $on={n === 7}>Page {n}{n === 7 && <TabClose>x</TabClose>}</Tab>)}
            <AddTab><Svg w={11} h={11} s="#1c1c1c"><path d="M5.500 .5v10M.5 5.500h10" strokeWidth="2" /></Svg></AddTab>
          </TabBar>
        </Work>
        <Viz>
          <VizHead><PaneTitle>Visualizations</PaneTitle><DoubleChev c="#fff" /></VizHead>
          <VizSub>Build visual</VizSub>
          <VizModes>
            <Mode $on><Svg w={24} h={26} crisp><path d="M0 1.500h19" stroke="#bbb" /><g fill={C.teal} stroke="#ddd"><rect x=".5" y="6.500" width="23" height="7" strokeDasharray="2 1" /><rect x=".5" y="17.500" width="23" height="7" strokeDasharray="2 1" /></g></Svg></Mode>
            <Mode><Svg w={24} h={26} s="#c4c4c4"><path d="M6 24.500H.5V1.500h10l7 7M10.500 1.500v7h7z" /><path d="M10.500 2v6.500h6.500z" fill="#ddd" /><path d="M23.500 10L13.500 18l2 2.500zM13.500 18c-3 0-3 4-6.500 6 4 1.500 8 0 8.500-3.500z" strokeWidth="1.200" /></Svg></Mode>
          </VizModes>
          <Svg w={180} h={13} s="#7a7a7a"><path d="M0 12.500h16l8-8 8 8h148" /></Svg>
          <VizGrid>
            {vizIcons.map((ic, i) => typeof ic === "string" ? <GlyphCell key={i}>{ic}</GlyphCell> : <Svg key={i} s={W}>{ic}</Svg>)}
          </VizGrid>
          <Wells>
            <WellLabel>Values</WellLabel>
            <Well $h={28}>Add data fields here</Well>
            <WellLabel $b>Drill through</WellLabel>
            <ToggleRow>Cross-report<Toggle><i />Off</Toggle></ToggleRow>
            <ToggleRow>Keep all filters<Toggle $on><i />On</Toggle></ToggleRow>
            <Well $h={26} $black>Add drill-through fields here</Well>
          </Wells>
        </Viz>
        <DataPane>
          <VizHead><PaneTitle>Data</PaneTitle><DoubleChev c="#fff" /></VizHead>
          <DataSearch><SearchBox $h={24} $b="#8a8a8a" $gap={7} $c="#b8b8b8"><Lens c="#ccc" />Search</SearchBox></DataSearch>
          <TableNode>
            <Svg w={8} h={10} s="#fff"><path d="M2 1l4 4-4 4" strokeWidth="1.200" /></Svg>
            <Svg w={14} h={14} s="#fff"><rect x="1.500" y="1.500" width="11" height="11" rx="1.500" /><path d="M1.500 4.500h11M1.500 8.500h11M5.500 1.500v11M8.500 1.500v11" /></Svg>
            LITA SQL CUSTOMERD...
          </TableNode>
        </DataPane>
      </Body>
      <StatusBar>Page 7 of 8
        <Zoom>
          <Svg w={124} h={14} s="#ddd"><path d="M0 7.500h4" strokeWidth="1.500" /><path d="M9 6.500h100M59.500 4v5" /><rect x="35" y="1" width="4" height="11" fill="#ddd" stroke="none" /><path d="M115.500 6.500h8M119.500 2.500v8" strokeWidth="1.300" /></Svg>
          <Percent>60%</Percent>
          <Svg w={15} h={11}><rect x=".5" y=".500" width="14" height="9" rx="1" /><path d="M5 3H3.500v4H5M10 3h1.500v4H10" stroke="#ddd" /></Svg>
        </Zoom>
      </StatusBar>
      <Taskbar>
        <Apps>
          <AppSlot><svg width="24" height="24" viewBox="0 0 24 24"><defs><linearGradient id="wn" x1="0" y1="0" x2="1" y2="1"><stop offset="0" stopColor="#5ccbfa" /><stop offset="1" stopColor="#0a6fd0" /></linearGradient></defs><path d="M0 0h11.500v11.500H0zM12.500 0H24v11.500H12.500zM0 12.500h11.500V24H0zM12.500 12.500H24V24H12.500z" fill="url(#wn)" /></svg></AppSlot>
          <AppSlot><Svg w={24} h={24} s="#262626"><circle cx="13.500" cy="10" r="8.300" strokeWidth="2" fill="#dfe5f8" /><path d="M7.500 16.500l-5 6" strokeWidth="2.800" /></Svg></AppSlot>
          <AppSlot><Svg w={25} h={24} s="none"><rect width="25" height="24" rx="1.500" fill="#222" /><rect x="2" y="2" width="10" height="20" fill="#e4e4e6" /><rect x="14" y="2" width="9" height="9" fill="#4cc9f5" /><rect x="14" y="13" width="9" height="3" fill="#2f9fe0" /><rect x="14" y="18" width="9" height="4" fill="#0f6fc4" /></Svg></AppSlot>
          <AppSlot><svg width="25" height="24" viewBox="0 0 25 24"><defs><linearGradient id="eg" x1="0" y1="0" x2="1" y2=".3"><stop offset="0" stopColor="#1b9de2" /><stop offset=".6" stopColor="#36c6d0" /><stop offset="1" stopColor="#6be04e" /></linearGradient></defs><path d="M.7 11C1.500 4.500 6.500.300 12.500.300 19.500.300 24.500 5 24.500 10.500c0 3.500-3 6-6 6-2.500 0-4-1-3-2.500 1.500-2.500-1-6-5-6C5.500 8 1.500 10 .7 11z" fill="url(#eg)" /><path d="M.6 12C1 9 5 7.500 8.500 8c2 .3 3.500 1.500 4.500 3-3-.5-5 2-4.500 5 .6 4 5 6.500 9 6.500-5 2.500-16 2-16.900-10.500z" fill="#0f66b8" /><path d="M13 11c-3.500 0-5 3-4 6 1.500 4 6 6 10 4.500 1.500-.6 3-2 4-3.700-2 1-5 1.300-7 .3C13 17 12 14 13 11z" fill="#1483cf" /></svg></AppSlot>
          <AppSlot><svg width="25" height="24" viewBox="0 0 25 24"><path d="M0 3q0-2 2-2h6l3 3v4H0z" fill="#e0a11a" /><path d="M0 5h23q2 0 2 2v14q0 2-2 2H2q-2 0-2-2z" fill="#fccd4d" /><path d="M5 17q0-2 2-2h11q2 0 2 2v6H5z" fill="#1b87d8" /><rect x="8" y="19" width="9" height="2" fill="#0b5fa8" /></svg></AppSlot>
          <AppSlot><svg width="24" height="24" viewBox="0 0 24 24" fill="none"><circle cx="12" cy="12" r="12" fill="#fb3a1a" /><path d="M4.500 7.500h4l3 8.500 3-8 3 8 2-8.500h-7M6.500 7.500l2.500 9.500h2.500" stroke="#fff" strokeWidth="1.500" /></svg></AppSlot>
          <AppSlot><svg width="24" height="24" viewBox="0 0 24 24"><path d="M7 6V1.500q0-.7.700-.7h8.600q.7 0 .7.700V6" stroke="#3bb4ee" strokeWidth="1.800" fill="none" /><path d="M.5 5h23v16q0 2.500-2.500 2.500H3Q.5 23.500.5 21z" fill="#17508f" /><path d="M7 9h4.500v4.500H7z" fill="#f25022" /><path d="M12.500 9H17v4.500h-4.500z" fill="#7fba00" /><path d="M7 14.500h4.500V19H7z" fill="#22a6ee" /><path d="M12.500 14.500H17V19h-4.500z" fill="#ffb900" /></svg></AppSlot>
          <AppSlot $on><svg width="20" height="24" viewBox="0 0 20 24"><rect x="11" y="0" width="9" height="24" rx="1" fill="#d9930f" /><rect x="5.500" y="6" width="9" height="18" rx="1" fill="#eeb91d" /><rect x="0" y="12" width="8.500" height="12" rx="1" fill="#f8d75a" /></svg></AppSlot>
        </Apps>
        <Tray>
          <Svg w={14} h={9} s="#111"><path d="M1 7.500L6.500 2 12 7.500" strokeWidth="1.300" /></Svg>
          <Svg w={17} h={15} s="none"><path d="M3.500 11.500Q0 11 .8 8q.7-2 3-2Q5 1.500 9.500 2q3.500.5 4.500 4l2 2v3z" fill="#555" stroke="#222" /><circle cx="11.500" cy="10" r="4.500" fill="#fff" /><path d="M8.500 9.500a3 3 0 015.500-1M14.500 10.500a3 3 0 01-5.500 1" stroke="#0f6fd0" strokeWidth="1.600" /></Svg>
          <Svg w={15} h={11} s="#111"><rect x=".7" y="1.500" width="12.500" height="8" rx="1" strokeWidth="1.300" /><rect x="2.500" y="3.500" width="6" height="4" fill="#111" stroke="none" /><path d="M14.300 4v3" /></Svg>
          <Svg w={18} h={14} s="#111"><path d="M1 5h2.500L7 1.500v11L3.500 9H1zM9.500 5q1.500 2 0 4M11.800 3q3 4 0 8M14.200 1.500q4 5.500 0 11" /></Svg>
          <TrayText $w={24} $lh={16.5} $ls={-0.1}>ENG<br />UK</TrayText>
          <TrayText $w={68} $lh={16} $ls={-0.15}>21:23<br />Thursday<br />14/11/2024</TrayText>
          <Svg w={32} h={26} s="#fff"><path d="M7 1h16v12H12l-3 3v-3H7z" fill="#111" stroke="none" /><path d="M10 4.500h10M10 7.500h10M10 10.500h6" /><circle cx="22.500" cy="16.500" r="8" fill="#d8dce2" stroke="#8f949c" /><text x="22.500" y="21" textAnchor="middle" fontSize="12" fontFamily="Open Sans" fill="#111" stroke="none">1</text></Svg>
          <Edge />
        </Tray>
      </Taskbar>
    </Window>
  );
}
